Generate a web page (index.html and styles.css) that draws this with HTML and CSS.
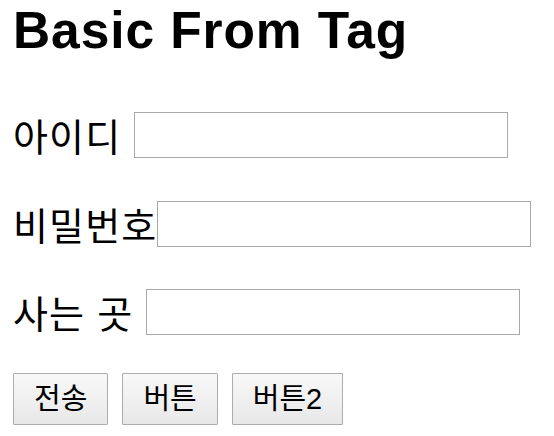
FILE: index.html
```html
<!DOCTYPE html>
<html lang="ko">
<head>
<meta charset="utf-8">
<title>Basic From Tag</title>
<link rel="stylesheet" href="styles.css">
</head>
<body>
  <h1 class="title">Basic From Tag</h1>
  <form class="form">
    <div class="row">
      <label class="label" for="uid">아이디</label>
      <input class="field" type="text" id="uid">
    </div>
    <div class="row row--tight">
      <label class="label" for="pw">비밀번호</label>
      <input class="field" type="password" id="pw">
    </div>
    <div class="row">
      <label class="label" for="addr">사는 곳</label>
      <input class="field" type="text" id="addr">
    </div>
    <div class="actions">
      <button class="btn" type="submit">전송</button>
      <button class="btn" type="button">버튼</button>
      <button class="btn" type="button">버튼2</button>
    </div>
  </form>
</body>
</html>
```

FILE: styles.css
```css
html, body {
  margin: 0;
  padding: 0;
  background: #ffffff;
}

body {
  padding: 0 13px;
  color: #000000;
  font-family: "Noto Sans CJK KR", "Noto Sans", sans-serif;
}

.title {
  margin: 0;
  padding-top: 0;
  font-family: "Liberation Sans", "Noto Sans CJK KR", sans-serif;
  font-weight: 700;
  font-size: 51.5px;
  line-height: 60px;
  letter-spacing: 0.9px;
}

.form {
  display: flex;
  flex-direction: column;
  gap: 42.5px;
  margin-top: 52px;
}

.row {
  display: flex;
  align-items: center;
  gap: 13px;
}

.row--tight {
  gap: 0;
}

.label {
  font-size: 38px;
  line-height: 46px;
  letter-spacing: 1.15px;
  word-spacing: 0.3px;
  white-space: nowrap;
}

.field {
  box-sizing: border-box;
  width: 374px;
  height: 46px;
  margin: 0;
  padding: 0 4px;
  border: 1px solid #a9a9a9;
  border-radius: 0;
  background: #ffffff;
  font-size: 28px;
  outline: none;
}

.actions {
  display: flex;
  gap: 14px;
  margin-top: -4.5px;
}

.btn {
  box-sizing: border-box;
  height: 52px;
  margin: 0;
  padding: 0 20px;
  border: 1px solid #acacac;
  border-radius: 1px;
  background: linear-gradient(to bottom, #f8f8f8, #e8e8e8);
  color: #000000;
  font-family: "Liberation Sans", "Noto Sans CJK KR", sans-serif;
  font-size: 29px;
  line-height: 48px;
}
```
